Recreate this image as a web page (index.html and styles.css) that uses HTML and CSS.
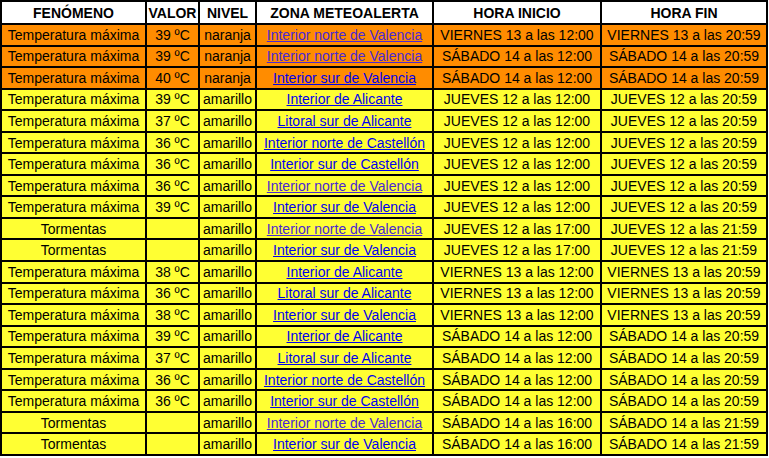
FILE: index.html
```html
<!DOCTYPE html>
<html lang="es">
<head>
<meta charset="utf-8">
<title>Avisos meteoalerta</title>
<link rel="stylesheet" href="styles.css">
</head>
<body>
<table class="alerts">
  <thead>
    <tr>
      <th class="c1">FENÓMENO</th>
      <th class="c2">VALOR</th>
      <th class="c3">NIVEL</th>
      <th class="c4">ZONA METEOALERTA</th>
      <th class="c5">HORA INICIO</th>
      <th class="c6">HORA FIN</th>
    </tr>
  </thead>
  <tbody>
    <tr class="naranja"><td>Temperatura máxima</td><td>39 ºC</td><td>naranja</td><td><a class="visited" href="#">Interior norte de Valencia</a></td><td>VIERNES 13 a las 12:00</td><td>VIERNES 13 a las 20:59</td></tr>
    <tr class="naranja"><td>Temperatura máxima</td><td>39 ºC</td><td>naranja</td><td><a class="visited" href="#">Interior norte de Valencia</a></td><td>SÁBADO 14 a las 12:00</td><td>SÁBADO 14 a las 20:59</td></tr>
    <tr class="naranja"><td>Temperatura máxima</td><td>40 ºC</td><td>naranja</td><td><a href="#">Interior sur de Valencia</a></td><td>SÁBADO 14 a las 12:00</td><td>SÁBADO 14 a las 20:59</td></tr>
    <tr class="amarillo"><td>Temperatura máxima</td><td>39 ºC</td><td>amarillo</td><td><a href="#">Interior de Alicante</a></td><td>JUEVES 12 a las 12:00</td><td>JUEVES 12 a las 20:59</td></tr>
    <tr class="amarillo"><td>Temperatura máxima</td><td>37 ºC</td><td>amarillo</td><td><a href="#">Litoral sur de Alicante</a></td><td>JUEVES 12 a las 12:00</td><td>JUEVES 12 a las 20:59</td></tr>
    <tr class="amarillo"><td>Temperatura máxima</td><td>36 ºC</td><td>amarillo</td><td><a href="#">Interior norte de Castellón</a></td><td>JUEVES 12 a las 12:00</td><td>JUEVES 12 a las 20:59</td></tr>
    <tr class="amarillo"><td>Temperatura máxima</td><td>36 ºC</td><td>amarillo</td><td><a href="#">Interior sur de Castellón</a></td><td>JUEVES 12 a las 12:00</td><td>JUEVES 12 a las 20:59</td></tr>
    <tr class="amarillo"><td>Temperatura máxima</td><td>36 ºC</td><td>amarillo</td><td><a class="visited" href="#">Interior norte de Valencia</a></td><td>JUEVES 12 a las 12:00</td><td>JUEVES 12 a las 20:59</td></tr>
    <tr class="amarillo"><td>Temperatura máxima</td><td>39 ºC</td><td>amarillo</td><td><a href="#">Interior sur de Valencia</a></td><td>JUEVES 12 a las 12:00</td><td>JUEVES 12 a las 20:59</td></tr>
    <tr class="amarillo"><td>Tormentas</td><td></td><td>amarillo</td><td><a class="visited" href="#">Interior norte de Valencia</a></td><td>JUEVES 12 a las 17:00</td><td>JUEVES 12 a las 21:59</td></tr>
    <tr class="amarillo"><td>Tormentas</td><td></td><td>amarillo</td><td><a href="#">Interior sur de Valencia</a></td><td>JUEVES 12 a las 17:00</td><td>JUEVES 12 a las 21:59</td></tr>
    <tr class="amarillo"><td>Temperatura máxima</td><td>38 ºC</td><td>amarillo</td><td><a href="#">Interior de Alicante</a></td><td>VIERNES 13 a las 12:00</td><td>VIERNES 13 a las 20:59</td></tr>
    <tr class="amarillo"><td>Temperatura máxima</td><td>36 ºC</td><td>amarillo</td><td><a href="#">Litoral sur de Alicante</a></td><td>VIERNES 13 a las 12:00</td><td>VIERNES 13 a las 20:59</td></tr>
    <tr class="amarillo"><td>Temperatura máxima</td><td>38 ºC</td><td>amarillo</td><td><a href="#">Interior sur de Valencia</a></td><td>VIERNES 13 a las 12:00</td><td>VIERNES 13 a las 20:59</td></tr>
    <tr class="amarillo"><td>Temperatura máxima</td><td>39 ºC</td><td>amarillo</td><td><a href="#">Interior de Alicante</a></td><td>SÁBADO 14 a las 12:00</td><td>SÁBADO 14 a las 20:59</td></tr>
    <tr class="amarillo"><td>Temperatura máxima</td><td>37 ºC</td><td>amarillo</td><td><a href="#">Litoral sur de Alicante</a></td><td>SÁBADO 14 a las 12:00</td><td>SÁBADO 14 a las 20:59</td></tr>
    <tr class="amarillo"><td>Temperatura máxima</td><td>36 ºC</td><td>amarillo</td><td><a href="#">Interior norte de Castellón</a></td><td>SÁBADO 14 a las 12:00</td><td>SÁBADO 14 a las 20:59</td></tr>
    <tr class="amarillo"><td>Temperatura máxima</td><td>36 ºC</td><td>amarillo</td><td><a href="#">Interior sur de Castellón</a></td><td>SÁBADO 14 a las 12:00</td><td>SÁBADO 14 a las 20:59</td></tr>
    <tr class="amarillo"><td>Tormentas</td><td></td><td>amarillo</td><td><a class="visited" href="#">Interior norte de Valencia</a></td><td>SÁBADO 14 a las 16:00</td><td>SÁBADO 14 a las 21:59</td></tr>
    <tr class="amarillo"><td>Tormentas</td><td></td><td>amarillo</td><td><a href="#">Interior sur de Valencia</a></td><td>SÁBADO 14 a las 16:00</td><td>SÁBADO 14 a las 21:59</td></tr>
  </tbody>
</table>
</body>
</html>
```
FILE: styles.css
```css
html, body {
  margin: 0;
  padding: 0;
  background: #ffffff;
}

.alerts {
  width: 768px;
  table-layout: fixed;
  border-collapse: separate;
  border-spacing: 0;
  border: 1px solid #000;
  font-family: "Liberation Sans", Arial, sans-serif;
  font-size: 14px;
  color: #000;
}

.alerts th,
.alerts td {
  box-sizing: border-box;
  border: 1px solid #000;
  text-align: center;
  vertical-align: middle;
  white-space: nowrap;
  overflow: hidden;
  padding: 0 1px;
  line-height: 16px;
}

.alerts th {
  height: 23px;
  font-weight: bold;
  background: #ffffff;
}

.alerts td {
  height: 21.55px;
}

.c1 { width: 145px; }
.c2 { width: 53px; }
.c3 { width: 57px; }
.c4 { width: 177px; }
.c5 { width: 168px; }
.c6 { width: 166px; }

.naranja td { background: #ff8c00; }
.amarillo td { background: #ffff33; }

.alerts a {
  color: #0000ee;
  text-decoration: underline;
}

.alerts a.visited {
  color: #4a28d4;
}
```
